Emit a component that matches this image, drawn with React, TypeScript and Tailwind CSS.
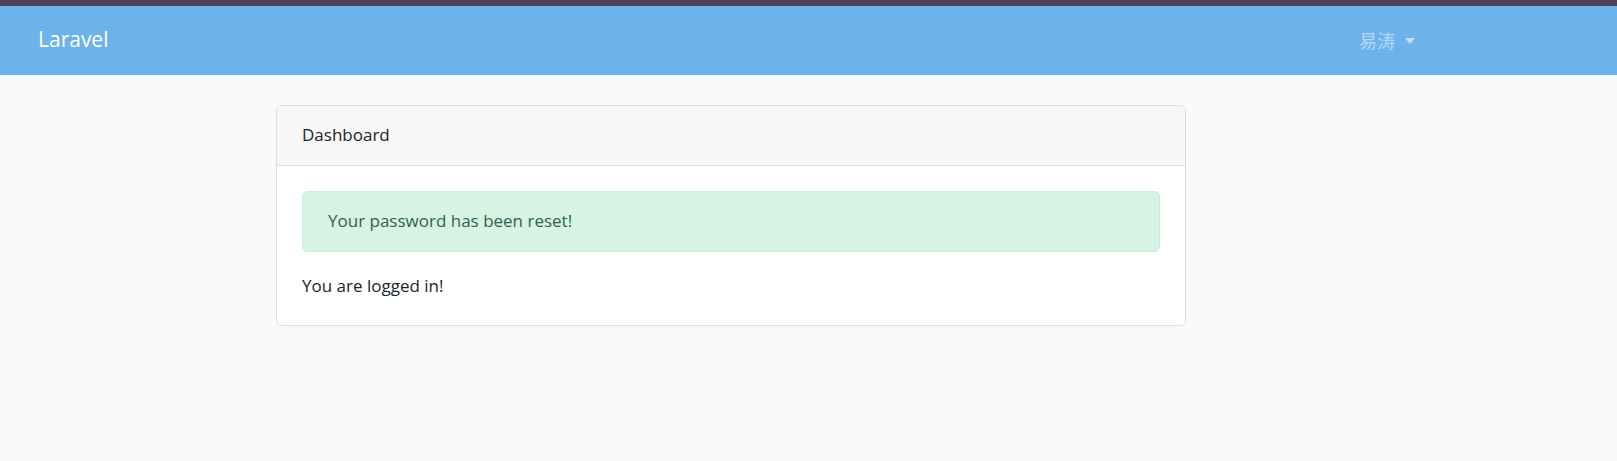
import React from "react";

export default function App() {
  return (
    <div
      className="min-h-[461px] bg-[#f8fafc] text-[#212529]"
      style={{ fontFamily: '"Open Sans", "Noto Sans CJK SC", sans-serif' }}
    >
      <div className="h-[6px] bg-[#4c4358]" />
      <nav className="h-[69px] bg-[#6cb2eb] flex items-center pl-[38px]">
        <div className="w-[1321px]">
          <span className="text-[21px] text-white leading-none">Laravel</span>
        </div>
        <div className="flex items-center text-[18px] text-white/50">
          <span style={{ fontFamily: '"Noto Sans CJK SC", sans-serif' }}>易涛</span>
          <span className="ml-[10px] w-0 h-0 border-x-[5px] border-x-transparent border-t-[6px] border-t-white/60" />
        </div>
      </nav>
      <div className="pt-[30px] pl-[276px]">
        <div className="w-[910px] bg-white border border-[#dfdfdf] rounded-[5px] overflow-hidden">
          <div className="bg-[#f7f7f7] border-b border-[#dfdfdf] px-[25px] py-[15px] text-[17px] leading-[28.8px]">
            Dashboard
          </div>
          <div className="p-[25px] text-[17px] leading-[28.8px]">
            <div className="bg-[#d7f3e3] border border-[#c7eed8] text-[#2f6447] rounded-[5px] px-[25px] py-[15px] mb-[20px]">
              Your password has been reset!
            </div>
            <div>You are logged in!</div>
          </div>
        </div>
      </div>
    </div>
  );
}
